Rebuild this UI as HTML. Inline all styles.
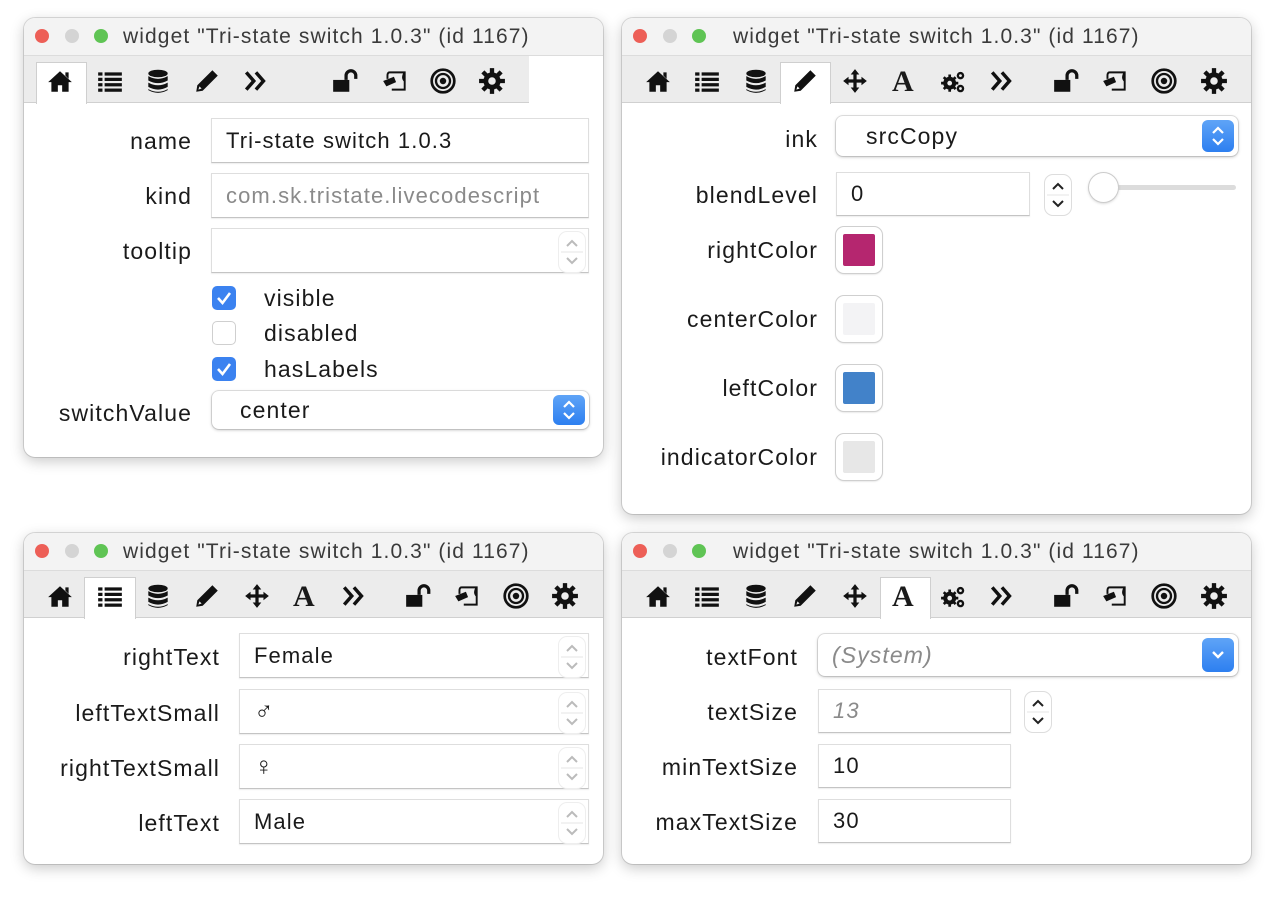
<!DOCTYPE html>
<html><head><meta charset="utf-8"><style>
body{margin:0;width:1278px;height:906px;background:#fff;position:relative;overflow:hidden;font-family:"Liberation Sans","DejaVu Sans",sans-serif;color:#1a1a1a}
.win{position:absolute;background:#fff;border-radius:11px;box-shadow:0 0 0 1px rgba(0,0,0,.13),0 4px 14px rgba(0,0,0,.22);overflow:hidden}
.tb{position:absolute;left:0;right:0;top:0;height:37px;background:#f3f3f3;border-bottom:1px solid #dcdcdc}
.dot{position:absolute;top:11px;width:14px;height:14px;border-radius:50%}
.ttl{position:absolute;top:7px;font-size:21px;letter-spacing:1.1px;color:#3a3a3a;white-space:nowrap}
.bar{position:absolute;left:0;top:38px;height:46px;background:#ececec;border-bottom:1px solid #d0d0d0}
.tab{position:absolute;top:44px;height:42px;background:#fff;border:1px solid #cfcfcf;border-bottom:none;box-sizing:border-box}
.ic{position:absolute;width:28px;height:28px;top:49px}
.lbl{position:absolute;font-size:23px;letter-spacing:1.1px;text-align:right;white-space:nowrap}
.fld{position:absolute;background:#fff;border:1px solid #dedede;border-bottom-color:#c4c4c4;box-sizing:border-box;font-size:22px;letter-spacing:1.1px;padding-left:14px;display:flex;align-items:center;box-shadow:0 1px 1px rgba(0,0,0,.08)}
.pop{position:absolute;background:#fff;border-radius:7px;box-shadow:0 0 0 1px rgba(0,0,0,.1),0 1px 3px rgba(0,0,0,.25);font-size:23px;letter-spacing:1.1px;display:flex;align-items:center}
.blue{position:absolute;right:4px;top:4px;bottom:4px;width:32px;border-radius:6px;background:linear-gradient(#5fa4f7,#2d7ff0)}
.stp{position:absolute;width:26px;height:40px;border-radius:9px;border:1px solid #ddd;background:#fff}
.stp svg{display:block}
.cb{position:absolute;width:24px;height:24px;border-radius:5px;box-sizing:border-box}
.sw{position:absolute;width:46px;height:46px;border-radius:8px;background:#fff;box-shadow:0 0 0 1px #cfcfcf,0 1px 2px rgba(0,0,0,.2)}
.sw i{position:absolute;left:7px;top:7px;width:32px;height:32px;border-radius:2px}
</style></head><body>
<svg width="0" height="0" style="position:absolute">
<defs>
<symbol id="home" viewBox="0 0 26 26"><path d="M13 4 L2 14 L5 14 L5 23 L11 23 L11 17 L15 17 L15 23 L21 23 L21 14 L24 14 Z M18 5 h3 v6 l-3 -3z" fill="#111"/></symbol>
<symbol id="list" viewBox="0 0 26 26"><g fill="#111"><rect x="2" y="5" width="4" height="3"/><rect x="8" y="5" width="16" height="3"/><rect x="2" y="10" width="4" height="3"/><rect x="8" y="10" width="16" height="3"/><rect x="2" y="15" width="4" height="3"/><rect x="8" y="15" width="16" height="3"/><rect x="2" y="20" width="4" height="3"/><rect x="8" y="20" width="16" height="3"/></g></symbol>
<symbol id="db" viewBox="0 0 26 26"><g fill="#111"><ellipse cx="13" cy="6" rx="9" ry="3.5"/><path d="M4 8.5 q9 5 18 0 v4 q-9 5 -18 0z M4 14.5 q9 5 18 0 v4 q-9 5 -18 0z M4 20.5 q9 5 18 0 v1 q-9 5 -18 0z"/></g></symbol>
<symbol id="pen" viewBox="0 0 26 26"><path d="M18 3 L23 8 L9 22 L3 23 L4 17 Z M6 18 L5 21 L8 20 Z" fill="#111" fill-rule="evenodd"/></symbol>
<symbol id="move" viewBox="0 0 26 26"><path d="M13 2 L17 7 H14.5 V11.5 H19 V9 L24 13 L19 17 V14.5 H14.5 V19 H17 L13 24 L9 19 H11.5 V14.5 H7 V17 L2 13 L7 9 V11.5 H11.5 V7 H9 Z" fill="#111"/></symbol>
<symbol id="gears" viewBox="0 0 26 26"><g fill="#111"><circle cx="9" cy="15" r="6"/><circle cx="19" cy="8" r="3.5"/><circle cx="19" cy="20" r="3.5"/></g><g fill="#ececec"><circle cx="19" cy="8" r="1.3"/><circle cx="19" cy="20" r="1.3"/></g><g stroke="#111" stroke-width="2.5"><path d="M9 7v16M1 15h16M3.5 9.5l11 11M14.5 9.5l-11 11"/></g><circle cx="9" cy="15" r="2.2" fill="#ececec"/></symbol>
<symbol id="chev" viewBox="0 0 26 26"><path d="M3 5 L10 13 L3 21 M12 5 L19 13 L12 21" fill="none" stroke="#111" stroke-width="3.2"/></symbol>
<symbol id="lock" viewBox="0 0 26 26"><rect x="2" y="12" width="15" height="11" fill="#111"/><path d="M14 12 V8 a4.5 4.5 0 0 1 9 0 V11" fill="none" stroke="#111" stroke-width="3"/></symbol>
<symbol id="scr" viewBox="0 0 26 26"><path d="M8 5 H22 V21 H10 M8 5 q-2 0 -2 3 V11 M22 5 q-3 5 0 8" fill="none" stroke="#111" stroke-width="1.8"/><path d="M2 13 L12 9 L14 14 L5 18 Z" fill="#111"/></symbol>
<symbol id="tgt" viewBox="0 0 26 26"><circle cx="13" cy="13" r="10.5" fill="none" stroke="#111" stroke-width="2.5"/><circle cx="13" cy="13" r="6.5" fill="none" stroke="#111" stroke-width="2.2"/><circle cx="13" cy="13" r="3" fill="#111"/></symbol>
<symbol id="gear" viewBox="0 0 26 26"><g fill="#111"><circle cx="13" cy="13" r="8"/><path d="M11 1h4v5h-4zM11 20h4v5h-4zM1 11h5v4h-5zM20 11h5v4h-5z"/><path d="M11 1h4v5h-4zM11 20h4v5h-4zM1 11h5v4h-5zM20 11h5v4h-5z" transform="rotate(45 13 13)"/></g><circle cx="13" cy="13" r="3.5" fill="#ececec"/></symbol>
<symbol id="ud" viewBox="0 0 26 40"><path d="M8 14 L13 9 L18 14 M8 26 L13 31 L18 26" fill="none" stroke="currentColor" stroke-width="2"/><path d="M2 20 H24" stroke="#e4e4e4"/></symbol>
</defs></svg>

<!-- W1 -->
<div class="win" style="left:24px;top:18px;width:579px;height:439px">
<div class="tb"></div>
<div class="dot" style="left:11px;background:#ed5f57"></div><div class="dot" style="left:41px;background:#d4d4d4"></div><div class="dot" style="left:70px;background:#5fc454"></div>
<div class="ttl" style="left:99px">widget "Tri-state switch 1.0.3" (id 1167)</div>
<div class="bar" style="width:505px"></div>
<div class="tab" style="left:12px;width:51px"></div>
<svg class="ic" style="left:22px"><use href="#home"/></svg>
<svg class="ic" style="left:72px"><use href="#list"/></svg>
<svg class="ic" style="left:120px"><use href="#db"/></svg>
<svg class="ic" style="left:169px"><use href="#pen"/></svg>
<svg class="ic" style="left:219px"><use href="#chev"/></svg>
<svg class="ic" style="left:307px"><use href="#lock"/></svg>
<svg class="ic" style="left:357px"><use href="#scr"/></svg>
<svg class="ic" style="left:405px"><use href="#tgt"/></svg>
<svg class="ic" style="left:454px"><use href="#gear"/></svg>
<div class="lbl" style="right:411px;top:110px">name</div>
<div class="fld" style="left:187px;top:100px;width:378px;height:45px">Tri-state switch 1.0.3</div>
<div class="lbl" style="right:411px;top:165px">kind</div>
<div class="fld" style="left:187px;top:155px;width:378px;height:45px;color:#8a8a8a">com.sk.tristate.livecodescript</div>
<div class="lbl" style="right:411px;top:220px">tooltip</div>
<div class="fld" style="left:187px;top:210px;width:378px;height:45px"></div>
<div class="stp" style="left:534px;top:213px;color:#bbb;border-color:#eee"><svg width="26" height="40"><use href="#ud"/></svg></div>
<div class="cb" style="left:188px;top:268px;background:#3b82f0"><svg width="24" height="24"><path d="M6 12 L10.5 17 L18 7" fill="none" stroke="#fff" stroke-width="2.6"/></svg></div>
<div class="lbl" style="left:240px;top:267px">visible</div>
<div class="cb" style="left:188px;top:303px;border:1px solid #cfcfcf;background:#fff"></div>
<div class="lbl" style="left:240px;top:302px">disabled</div>
<div class="cb" style="left:188px;top:339px;background:#3b82f0"><svg width="24" height="24"><path d="M6 12 L10.5 17 L18 7" fill="none" stroke="#fff" stroke-width="2.6"/></svg></div>
<div class="lbl" style="left:240px;top:338px">hasLabels</div>
<div class="lbl" style="right:411px;top:382px">switchValue</div>
<div class="pop" style="left:188px;top:373px;width:377px;height:38px"><span style="margin-left:28px">center</span><div class="blue"><svg width="32" height="30"><path d="M11 12 L16 7 L21 12 M11 18 L16 23 L21 18" fill="none" stroke="#fff" stroke-width="2.2"/></svg></div></div>
</div>

<!-- W2 -->
<div class="win" style="left:622px;top:18px;width:629px;height:496px">
<div class="tb"></div>
<div class="dot" style="left:11px;background:#ed5f57"></div><div class="dot" style="left:41px;background:#d4d4d4"></div><div class="dot" style="left:70px;background:#5fc454"></div>
<div class="ttl" style="left:111px">widget "Tri-state switch 1.0.3" (id 1167)</div>
<div class="bar" style="width:629px"></div>
<div class="tab" style="left:158px;width:51px"></div>
<svg class="ic" style="left:22px"><use href="#home"/></svg>
<svg class="ic" style="left:71px"><use href="#list"/></svg>
<svg class="ic" style="left:120px"><use href="#db"/></svg>
<svg class="ic" style="left:169px"><use href="#pen"/></svg>
<svg class="ic" style="left:219px"><use href="#move"/></svg>
<div style="position:absolute;left:270px;top:47px;font:bold 30px 'Liberation Serif',serif">A</div>
<svg class="ic" style="left:318px"><use href="#gears"/></svg>
<svg class="ic" style="left:367px"><use href="#chev"/></svg>
<svg class="ic" style="left:430px"><use href="#lock"/></svg>
<svg class="ic" style="left:479px"><use href="#scr"/></svg>
<svg class="ic" style="left:528px"><use href="#tgt"/></svg>
<svg class="ic" style="left:578px"><use href="#gear"/></svg>
<div class="lbl" style="right:433px;top:108px">ink</div>
<div class="pop" style="left:214px;top:98px;width:402px;height:40px"><span style="margin-left:30px">srcCopy</span><div class="blue"><svg width="32" height="32"><path d="M11 13 L16 8 L21 13 M11 19 L16 24 L21 19" fill="none" stroke="#fff" stroke-width="2.2"/></svg></div></div>
<div class="lbl" style="right:433px;top:164px">blendLevel</div>
<div class="fld" style="left:214px;top:154px;width:194px;height:44px">0</div>
<div class="stp" style="left:422px;top:156px;color:#222"><svg width="26" height="40"><use href="#ud"/></svg></div>
<div style="position:absolute;left:466px;top:167px;width:148px;height:5px;border-radius:3px;background:#dcdcdc"></div>
<div style="position:absolute;left:467px;top:155px;width:29px;height:29px;border-radius:50%;background:#fff;box-shadow:0 0 0 1px #ccc,0 1px 3px rgba(0,0,0,.25)"></div>
<div class="lbl" style="right:433px;top:219px">rightColor</div>
<div class="sw" style="left:214px;top:209px"><i style="background:#b5266f"></i></div>
<div class="lbl" style="right:433px;top:288px">centerColor</div>
<div class="sw" style="left:214px;top:278px"><i style="background:#f3f3f5"></i></div>
<div class="lbl" style="right:433px;top:357px">leftColor</div>
<div class="sw" style="left:214px;top:347px"><i style="background:#4282c9"></i></div>
<div class="lbl" style="right:433px;top:426px">indicatorColor</div>
<div class="sw" style="left:214px;top:416px"><i style="background:#e7e7e7"></i></div>
</div>

<!-- W3 -->
<div class="win" style="left:24px;top:533px;width:579px;height:331px">
<div class="tb"></div>
<div class="dot" style="left:11px;background:#ed5f57"></div><div class="dot" style="left:41px;background:#d4d4d4"></div><div class="dot" style="left:70px;background:#5fc454"></div>
<div class="ttl" style="left:99px">widget "Tri-state switch 1.0.3" (id 1167)</div>
<div class="bar" style="width:579px"></div>
<div class="tab" style="left:60px;width:52px"></div>
<svg class="ic" style="left:22px"><use href="#home"/></svg>
<svg class="ic" style="left:72px"><use href="#list"/></svg>
<svg class="ic" style="left:120px"><use href="#db"/></svg>
<svg class="ic" style="left:169px"><use href="#pen"/></svg>
<svg class="ic" style="left:219px"><use href="#move"/></svg>
<div style="position:absolute;left:269px;top:47px;font:bold 30px 'Liberation Serif',serif">A</div>
<svg class="ic" style="left:317px"><use href="#chev"/></svg>
<svg class="ic" style="left:380px"><use href="#lock"/></svg>
<svg class="ic" style="left:429px"><use href="#scr"/></svg>
<svg class="ic" style="left:478px"><use href="#tgt"/></svg>
<svg class="ic" style="left:527px"><use href="#gear"/></svg>
<div class="lbl" style="right:383px;top:111px">rightText</div>
<div class="fld" style="left:215px;top:100px;width:350px;height:45px">Female</div>
<div class="lbl" style="right:383px;top:167px">leftTextSmall</div>
<div class="fld" style="left:215px;top:156px;width:350px;height:45px;font-size:26px">♂</div>
<div class="lbl" style="right:383px;top:222px">rightTextSmall</div>
<div class="fld" style="left:215px;top:211px;width:350px;height:45px;font-size:26px">♀</div>
<div class="lbl" style="right:383px;top:277px">leftText</div>
<div class="fld" style="left:215px;top:266px;width:350px;height:45px">Male</div>
<div class="stp" style="left:534px;top:103px;color:#bbb;border-color:#eee"><svg width="26" height="40"><use href="#ud"/></svg></div>
<div class="stp" style="left:534px;top:159px;color:#bbb;border-color:#eee"><svg width="26" height="40"><use href="#ud"/></svg></div>
<div class="stp" style="left:534px;top:214px;color:#bbb;border-color:#eee"><svg width="26" height="40"><use href="#ud"/></svg></div>
<div class="stp" style="left:534px;top:269px;color:#bbb;border-color:#eee"><svg width="26" height="40"><use href="#ud"/></svg></div>
</div>

<!-- W4 -->
<div class="win" style="left:622px;top:533px;width:629px;height:331px">
<div class="tb"></div>
<div class="dot" style="left:11px;background:#ed5f57"></div><div class="dot" style="left:41px;background:#d4d4d4"></div><div class="dot" style="left:70px;background:#5fc454"></div>
<div class="ttl" style="left:111px">widget "Tri-state switch 1.0.3" (id 1167)</div>
<div class="bar" style="width:629px"></div>
<div class="tab" style="left:258px;width:51px"></div>
<svg class="ic" style="left:22px"><use href="#home"/></svg>
<svg class="ic" style="left:71px"><use href="#list"/></svg>
<svg class="ic" style="left:120px"><use href="#db"/></svg>
<svg class="ic" style="left:169px"><use href="#pen"/></svg>
<svg class="ic" style="left:219px"><use href="#move"/></svg>
<div style="position:absolute;left:270px;top:47px;font:bold 30px 'Liberation Serif',serif">A</div>
<svg class="ic" style="left:318px"><use href="#gears"/></svg>
<svg class="ic" style="left:367px"><use href="#chev"/></svg>
<svg class="ic" style="left:430px"><use href="#lock"/></svg>
<svg class="ic" style="left:479px"><use href="#scr"/></svg>
<svg class="ic" style="left:528px"><use href="#tgt"/></svg>
<svg class="ic" style="left:578px"><use href="#gear"/></svg>
<div class="lbl" style="right:453px;top:111px">textFont</div>
<div class="pop" style="left:196px;top:101px;width:420px;height:42px"><span style="margin-left:14px;color:#8a8a8a;font-style:italic">(System)</span><div class="blue"><svg width="32" height="34"><path d="M11 14 L16 19 L21 14" fill="none" stroke="#fff" stroke-width="2.4"/></svg></div></div>
<div class="lbl" style="right:453px;top:166px">textSize</div>
<div class="fld" style="left:196px;top:156px;width:193px;height:44px;color:#8a8a8a;font-style:italic">13</div>
<div class="stp" style="left:402px;top:158px;color:#222"><svg width="26" height="40"><use href="#ud"/></svg></div>
<div class="lbl" style="right:453px;top:221px">minTextSize</div>
<div class="fld" style="left:196px;top:211px;width:193px;height:44px">10</div>
<div class="lbl" style="right:453px;top:276px">maxTextSize</div>
<div class="fld" style="left:196px;top:266px;width:193px;height:44px">30</div>
</div>
</body></html>
